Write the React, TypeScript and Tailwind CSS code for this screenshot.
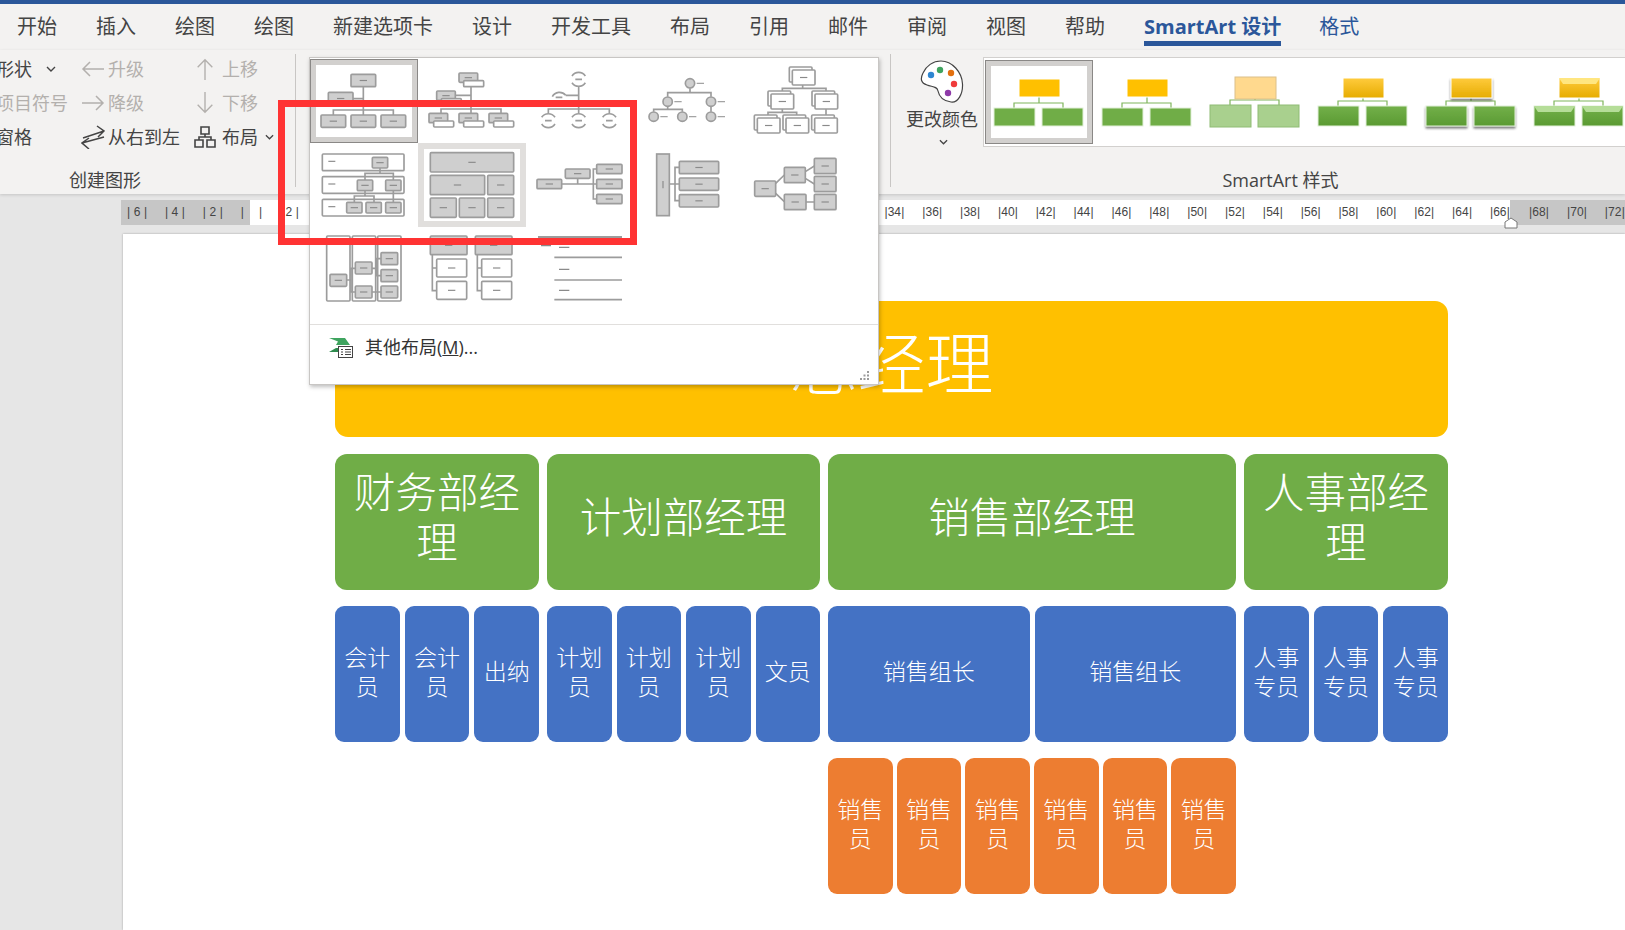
const tabs = ["开始", "插入", "绘图", "绘图", "新建选项卡", "设计", "开发工具", "布局", "引用", "邮件", "审阅", "视图", "帮助"];

const INK = "#9c9c9c";
const GREY = "#cfcfcf";

// all thumb coordinates are in 3x pixels, one cell is 324x252
function Box({ x, y, w, h, fill = GREY, dash = true }: { x: number; y: number; w: number; h: number; fill?: string; dash?: boolean }) {
  const cx = x + w / 2;
  const cy = y + h / 2;
  return (
    <>
      <rect x={x} y={y} width={w} height={h} rx={3} fill={fill} stroke={INK} strokeWidth={5} />
      {dash && <path d={`M${cx - 11} ${cy}H${cx + 11}`} stroke="#8a8a8a" strokeWidth={3.5} />}
    </>
  );
}

function Thumb({ ox, oy, lines, children }: { ox: number; oy: number; lines?: string; children?: React.ReactNode }) {
  return (
    <svg viewBox={`${ox} ${oy} 324 252`} className="block h-[84px] w-[108px]">
      {lines && <path d={lines} fill="none" stroke={INK} strokeWidth={5} />}
      {children}
    </svg>
  );
}

function Arcs({ x, y }: { x: number; y: number }) {
  return (
    <path
      d={`M${x - 20} ${y - 10}A24 24 0 0 1 ${x + 20} ${y - 10}M${x - 20} ${y + 10}A24 24 0 0 0 ${x + 20} ${y + 10}M${x - 10} ${y}H${x + 10}`}
      fill="none"
      stroke={INK}
      strokeWidth={5}
    />
  );
}

function Dot({ x, y, dash = true }: { x: number; y: number; dash?: boolean }) {
  return (
    <>
      <circle cx={x} cy={y} r={14} fill={GREY} stroke={INK} strokeWidth={5} />
      {dash && <path d={`M${x + 20} ${y}H${x + 42}`} stroke={INK} strokeWidth={3.5} />}
    </>
  );
}

function Stack({ x, y }: { x: number; y: number }) {
  return (
    <>
      <rect x={x - 9} y={y - 9} width={68} height={45} rx={3} fill="#fff" stroke={INK} strokeWidth={5} />
      <Box x={x} y={y} w={68} h={45} fill="#fff" />
    </>
  );
}

function Pair({ x, y }: { x: number; y: number }) {
  return (
    <>
      <Box x={x} y={y} w={56} h={28} />
      <Box x={x + 14} y={y + 23} w={60} h={18} fill="#fff" dash={false} />
    </>
  );
}

const layouts = [
  <Thumb ox={30} oy={27} lines="M190 110V195M159 146H190M100 195V180H280V195">
    <Box x={153} y={73} w={74} h={37} />
    <Box x={85} y={127} w={74} h={37} />
    <Box x={63} y={195} w={74} h={37} />
    <Box x={153} y={195} w={74} h={37} />
    <Box x={243} y={195} w={74} h={37} />
  </Thumb>,
  <Thumb ox={354} oy={27} lines="M513 110V190M466 136H513M423 190V177H603V190">
    <Pair x={477} y={69} />
    <Pair x={410} y={123} />
    <Pair x={387} y={190} />
    <Pair x={477} y={190} />
    <Pair x={567} y={190} />
  </Thumb>,
  <Thumb ox={678} oy={27} lines="M836 110V190M797 136H836M745 190V177H928V190">
    <Arcs x={836} y={88} />
    <path d="M757 140A24 24 0 0 1 797 136M767 142H787" fill="none" stroke={INK} strokeWidth={5} />
    <Arcs x={745} y={212} />
    <Arcs x={836} y={212} />
    <Arcs x={928} y={212} />
  </Thumb>,
  <Thumb ox={42} oy={27} lines="M210 115V128M143 140V128H273V140M143 170V178M101 185V178H187V185M273 170V185">
    <Dot x={210} y={100} />
    <Dot x={143} y={155} />
    <Dot x={273} y={155} />
    <Dot x={101} y={200} />
    <Dot x={187} y={200} />
    <Dot x={273} y={200} />
  </Thumb>,
  <Thumb ox={366} oy={27} lines="M548 105V115M487 123V115H618V123M487 177V187M444 195V187H530V195M618 177V195">
    <Stack x={517} y={60} />
    <Stack x={453} y={132} />
    <Stack x={585} y={132} />
    <Stack x={412} y={204} />
    <Stack x={498} y={204} />
    <Stack x={584} y={204} />
  </Thumb>,
  <Thumb ox={30} oy={279}>
    {[312, 380, 448].map((y) => (
      <g key={y}>
        <rect x={67} y={y} width={245} height={50} rx={3} fill="#fff" stroke={INK} strokeWidth={5} />
        <path d={`M85 ${y + 22}H106`} stroke="#8a8a8a" strokeWidth={3.5} />
      </g>
    ))}
    <path d="M240 354V370M195 390V370H280V390M195 422V438M163 457V438H222V457M280 422V457" fill="none" stroke={INK} strokeWidth={5} />
    <Box x={217} y={322} w={46} h={32} />
    <Box x={172} y={390} w={46} h={32} />
    <Box x={257} y={390} w={46} h={32} />
    <Box x={140} y={457} w={46} h={32} />
    <Box x={198} y={457} w={46} h={32} />
    <Box x={257} y={457} w={46} h={32} />
  </Thumb>,
  <Thumb ox={354} oy={279}>
    <Box x={391} y={308} w={250} h={58} />
    <Box x={391} y={376} w={163} h={58} />
    <Box x={563} y={376} w={78} h={58} />
    <Box x={391} y={444} w={78} h={58} />
    <Box x={478} y={444} w={76} h={58} />
    <Box x={563} y={444} w={78} h={58} />
  </Thumb>,
  <Thumb ox={678} oy={279} lines="M785 402H890M833 385V402M890 357H880V447H890">
    <Box x={711} y={388} w={74} h={28} />
    <Box x={796} y={357} w={74} h={28} />
    <Box x={890} y={343} w={76} h={28} />
    <Box x={890} y={388} w={76} h={28} />
    <Box x={890} y={433} w={76} h={28} />
  </Thumb>,
  <Thumb ox={42} oy={279} lines="M148 402H178M178 352H165V452H178">
    <rect x={110} y={312} width={38} height={185} fill={GREY} stroke={INK} strokeWidth={5} />
    <path d="M129 393V415" stroke="#8a8a8a" strokeWidth={3.5} />
    <Box x={178} y={334} w={118} h={37} />
    <Box x={178} y={384} w={118} h={37} />
    <Box x={178} y={434} w={118} h={37} />
  </Thumb>,
  <Thumb ox={366} oy={279} lines="M467 400L493 375M467 430L493 455M556 365L583 348M556 385L583 402M558 456H583">
    <Box x={404} y={393} w={63} h={46} />
    <Box x={493} y={352} w={63} h={46} />
    <Box x={493} y={433} w={65} h={46} />
    <Box x={583} y={325} w={65} h={46} />
    <Box x={583} y={379} w={65} h={46} />
    <Box x={583} y={433} w={65} h={46} />
  </Thumb>,
  <Thumb ox={30} oy={-9}>
    {[80, 157, 233].map((x) => (
      <rect key={x} x={x} y={18} width={70} height={195} rx={3} fill="#fff" stroke={INK} strokeWidth={5} />
    ))}
    <path d="M140 150H153V115H166M153 150V186H166M216 186H243M216 115H230V86H243M230 115V137H243" fill="none" stroke={INK} strokeWidth={5} />
    <Box x={90} y={133} w={50} h={36} />
    <Box x={166} y={96} w={50} h={36} />
    <Box x={166} y={168} w={50} h={36} />
    <Box x={243} y={68} w={50} h={36} />
    <Box x={243} y={119} w={50} h={36} />
    <Box x={243} y={168} w={50} h={36} />
  </Thumb>,
  <Thumb ox={354} oy={-9} lines="M397 74V182H410M397 114H410M532 74V182H545M532 114H545">
    <Box x={391} y={18} w={110} h={56} />
    <Box x={526} y={18} w={110} h={56} />
    <Box x={410} y={87} w={90} h={54} fill="#fff" />
    <Box x={410} y={154} w={90} h={54} fill="#fff" />
    <Box x={545} y={87} w={90} h={54} fill="#fff" />
    <Box x={545} y={154} w={90} h={54} fill="#fff" />
  </Thumb>,
  <Thumb ox={678} oy={-9} lines="M763 82H966M763 150H966M763 209H966">
    <rect x={714} y={18} width={252} height={20} fill={INK} />
    <path d="M723 47H753M777 52H808M777 118H808M777 181H808" stroke="#8a8a8a" strokeWidth={3.5} />
  </Thumb>,
];

// SmartArt style thumbs, coordinates are plain pixels in a 108x84 cell
function StyleThumb({ kind }: { kind: number }) {
  const pale = kind === 3;
  const flat = kind === 1 || kind === 2;
  const y = pale ? 17 : flat ? 19 : 18;
  const topH = pale ? 22 : flat ? 18 : 20;
  const gy = pale ? 45 : flat ? 48 : 46;
  const gh = pale ? 22 : flat ? 18 : 20;
  const topFill = pale ? "#ffd98e" : flat ? "#ffc000" : `url(#yel${kind})`;
  const greenFill = pale ? "#a9d08e" : flat ? "#70ad47" : `url(#grn${kind})`;
  const edge = pale ? "#dcc08a" : "#ffffff";
  const edgeG = pale ? "#8fbc75" : "#e2f0d9";
  const shadow = kind === 5 ? `url(#sh${kind})` : undefined;
  const boxes = [9, 57];
  return (
    <svg viewBox="0 0 108 84" className="block h-[84px] w-[108px] shrink-0">
      <defs>
        <linearGradient id={`yel${kind}`} x1="0" y1="0" x2="0" y2="1">
          <stop offset="0" stopColor="#ffcb3d" />
          <stop offset="1" stopColor="#e6ac00" />
        </linearGradient>
        <linearGradient id={`grn${kind}`} x1="0" y1="0" x2="0" y2="1">
          <stop offset="0" stopColor="#73b04a" />
          <stop offset="1" stopColor="#5a9a32" />
        </linearGradient>
        <filter id={`sh${kind}`} x="-20%" y="-20%" width="140%" height="160%">
          <feDropShadow dx="0" dy="2" stdDeviation="1.2" floodColor="#333" floodOpacity="0.65" />
        </filter>
      </defs>
      <path d={`M54 ${y + topH}V${gy - 5}M29 ${gy}V${gy - 5}H78V${gy}`} fill="none" stroke="#7fb55c" strokeWidth={1.2} />
      <rect x={34} y={y} width={41} height={topH} fill={topFill} stroke={edge} strokeWidth={1} filter={shadow} />
      {boxes.map((x) => (
        <rect key={x} x={x} y={gy} width={41} height={gh} fill={greenFill} stroke={edgeG} strokeWidth={1} filter={shadow} />
      ))}
      {kind === 6 && (
        <>
          <path d={`M34 ${y}H75L71 ${y + 6}H38Z`} fill="#ffe680" />
          {boxes.map((x) => (
            <path key={x} d={`M${x} ${gy}H${x + 41}L${x + 37} ${gy + 6}H${x + 4}Z`} fill="#b5dd98" />
          ))}
        </>
      )}
    </svg>
  );
}

function Chevron({ className }: { className: string }) {
  return (
    <svg viewBox="0 0 10 6" className={className} fill="none" stroke="#444" strokeWidth={1.4}>
      <path d="M1 1l4 4 4-4" />
    </svg>
  );
}

function ArrowIcon({ d, big }: { d: string; big?: boolean }) {
  return (
    <svg viewBox="0 0 24 24" className={big ? "h-[24px] w-[24px]" : "h-[24px] w-[22px]"} fill="none" stroke="#b3b0ad" strokeWidth={1.5}>
      <path d={d} />
    </svg>
  );
}

function Tick({ n }: { n: number }) {
  return (
    <span className="flex w-[20px] justify-between">
      <span>|</span>
      <span>{n}</span>
      <span>|</span>
    </span>
  );
}

function Cells({ items, color, gap }: { items: string[]; color: string; gap: string }) {
  return (
    <div className={`flex h-[136px] ${gap}`}>
      {items.map((t, i) => (
        <div key={i} className={`flex flex-1 items-center justify-center rounded-[9px] px-[8px] pb-[5px] text-center text-[23px] leading-[29px] font-light text-white ${color}`}>
          {t}
        </div>
      ))}
    </div>
  );
}

function Manager({ text }: { text: string }) {
  return (
    <div className="flex h-[136px] items-center justify-center rounded-[12px] bg-[#70ad47] px-[18px] pb-[11px] text-center text-[41.5px] leading-[50px] font-light text-white">
      {text}
    </div>
  );
}

export default function App() {
  return (
    <div className="relative flex h-[930px] w-[1625px] flex-col overflow-hidden bg-[#e6e6e6] font-['Open_Sans','Noto_Sans_CJK_SC',sans-serif] text-[#444]">
      <div className="h-[4px] bg-[#2b579a]" />

      <div className="flex h-[46px] gap-[39px] bg-[#f3f2f1] pl-[17px] text-[20px] leading-[46px]">
        {tabs.map((t, i) => (
          <span key={i} className="whitespace-nowrap">{t}</span>
        ))}
        <span className="h-[42px] border-b-[5px] border-[#2b579a] font-bold whitespace-nowrap text-[#2b579a]">SmartArt 设计</span>
        <span className="-ml-[1px] whitespace-nowrap text-[#2b579a]">格式</span>
      </div>

      <div className="relative z-10 flex h-[144px] bg-[#f3f2f1] pt-[4px] text-[18px] shadow-[0_1px_3px_rgba(0,0,0,0.15)]">
        <div className="h-[133px] w-[296px] shrink-0 border-r border-[#c8c6c4]">
          <div className="-mt-[2px] flex">
            <div className="w-[68px] overflow-hidden">
              <div className="flex h-[34px] items-center justify-end pr-[12px] whitespace-nowrap">
                转换为形状
                <Chevron className="ml-[14px] h-[6px] w-[10px] shrink-0" />
              </div>
              <div className="flex h-[34px] items-center justify-end whitespace-nowrap text-[#b3b0ad]">添加项目符号</div>
              <div className="flex h-[34px] items-center justify-end pr-[36px] whitespace-nowrap">文本窗格</div>
            </div>

            <div className="ml-[13px] w-[113px]">
              <div className="flex h-[34px] items-center gap-[3px] text-[#b3b0ad]">
                <ArrowIcon big d="M23 12H2M9 5l-7 7 7 7" />
                升级
              </div>
              <div className="flex h-[34px] items-center gap-[3px] text-[#b3b0ad]">
                <ArrowIcon big d="M1 12h21M15 5l7 7-7 7" />
                降级
              </div>
              <div className="flex h-[34px] items-center gap-[3px] whitespace-nowrap">
                <svg viewBox="0 0 24 24" className="h-[24px] w-[24px]" fill="none" stroke="#444" strokeWidth={1.5}>
                  <path d="M2 13L23 6M16 1l7 5-6 6M23 12L1 18M8 13l-7 5 7 6" />
                </svg>
                从右到左
              </div>
            </div>

            <div>
              <div className="flex h-[34px] items-center gap-[6px] text-[#b3b0ad]">
                <ArrowIcon d="M12 24V2M4 10l8-8 8 8" />
                上移
              </div>
              <div className="flex h-[34px] items-center gap-[6px] text-[#b3b0ad]">
                <ArrowIcon d="M12 0v22M4 14l8 8 8-8" />
                下移
              </div>
              <div className="flex h-[34px] items-center gap-[6px]">
                <svg viewBox="0 0 22 22" className="h-[22px] w-[22px]" fill="none" stroke="#444" strokeWidth={1.6}>
                  <path d="M7 1h8v7H7zM1 14h8v7H1zM13 14h8v7h-8zM11 8v3M5 14v-3h12v3" />
                </svg>
                布局
                <Chevron className="ml-[1px] h-[6px] w-[9px]" />
              </div>
            </div>
          </div>
          <div className="mt-[14px] w-[210px] text-center leading-[24px]">创建图形</div>
        </div>

        <div className="relative w-[594px] shrink-0">
          <div className="absolute top-[3px] left-[13px] h-[328px] w-[570px] border border-[#c8c6c4] bg-white text-[#333] shadow-[1px_2px_4px_rgba(0,0,0,0.25)]">
            <div className="grid grid-cols-[repeat(5,108px)] auto-rows-[84px] pt-[1px]">
              {layouts.map((thumb, i) => (
                <div key={i} className="relative">
                  {thumb}
                  {i === 0 && <div className="absolute inset-0 border-[6px] border-[#d2d0ce] outline outline-1 -outline-offset-1 outline-[#8a8886]" />}
                  {i === 6 && <div className="absolute inset-0 border-[6px] border-[#e1dfdd]" />}
                </div>
              ))}
            </div>
            <div className="mt-[13px] border-t border-[#e1dfdd]" />
            <div className="flex h-[45px] items-center pl-[18px]">
              <svg viewBox="0 0 25 20" className="h-[20px] w-[25px]">
                <path d="M1 0h16l5 7H8l2-3.5L1 0z" fill="#3fa45f" />
                <path d="M1 14l7-4h4v4H1z" fill="#2e8b4e" />
                <rect x="10.5" y="8.5" width="14" height="11" fill="#fff" stroke="#444" />
                <path d="M13 11.5h2M17 11.5h6M13 14h2M17 14h6M13 16.5h2M17 16.5h6" stroke="#444" />
              </svg>
              <span className="ml-[12px] whitespace-nowrap">
                其他布局(<span className="underline">M</span>)...
              </span>
            </div>
            <svg viewBox="0 0 10 9" className="absolute right-[8px] bottom-[4px] h-[9px] w-[10px]" fill="#9a9a9a">
              <rect x="7" y="0" width="2" height="2" />
              <rect x="7" y="3.5" width="2" height="2" />
              <rect x="3.5" y="3.5" width="2" height="2" />
              <rect x="7" y="7" width="2" height="2" />
              <rect x="3.5" y="7" width="2" height="2" />
              <rect x="0" y="7" width="2" height="2" />
            </svg>
          </div>
        </div>

        <div className="h-[133px] w-[780px] shrink-0 border-l border-[#c8c6c4]">
          <div className="flex h-[103px]">
            <div className="ml-[15px] flex w-[72px] flex-col items-center pt-[6px]">
              <svg viewBox="0 0 44 43" className="h-[43px] w-[44px]">
                <path d="M21 1C32 1 42 12 42.5 24C43 34 38 43 31 42C23 41 19 36 18 31C17 26 12 27 7 25C1 23 0 19 3 13C6 6 13 1 21 1Z" fill="#fff" stroke="#444" strokeWidth={1.2} />
                <circle cx="11" cy="15" r="3.2" fill="#2e86d1" />
                <circle cx="20" cy="10" r="3.2" fill="#3fa45f" />
                <circle cx="31" cy="13" r="3.2" fill="#e3700f" />
                <circle cx="34" cy="24" r="3.2" fill="#ef3b3b" />
                <circle cx="28" cy="33" r="3.2" fill="#8e3aa8" />
              </svg>
              <span className="mt-[4px] leading-[24px] whitespace-nowrap">更改颜色</span>
              <Chevron className="mt-[8px] ml-[3px] h-[6px] w-[9px]" />
            </div>
            <div className="mt-[3px] ml-[5px] flex h-[90px] w-[680px] items-start border border-[#d2d0ce] bg-white pt-[2px] pl-[1px]">
              {[1, 2, 3, 4, 5, 6].map((k) => (
                <div key={k} className="relative">
                  <StyleThumb kind={k} />
                  {k === 1 && <div className="absolute inset-0 border-[6px] border-[#d2d0ce] outline outline-1 -outline-offset-1 outline-[#8a8886]" />}
                </div>
              ))}
            </div>
          </div>
          <div className="mt-[11px] text-center leading-[24px]">SmartArt 样式</div>
        </div>
      </div>

      <div className="mt-[6px] flex h-[25px] shrink-0 pl-[121px] font-['Liberation_Sans',sans-serif] text-[12px] leading-[25px] text-[#444]">
        <div className="flex w-[129px] gap-[17.9px] bg-[#c6c6c6] pl-[6px]">
          {[6, 4, 2].map((n) => (
            <Tick key={n} n={n} />
          ))}
          <span>|</span>
        </div>
        <div className="flex w-[1260px] gap-[17.9px] bg-white pl-[9px]">
          <span className="w-[2px]">|</span>
          {Array.from({ length: 33 }, (_, i) => (i + 1) * 2).map((n) => (
            <Tick key={n} n={n} />
          ))}
        </div>
        <div className="flex flex-1 gap-[17.9px] bg-[#c6c6c6] pl-[19px]">
          {[68, 70, 72].map((n) => (
            <Tick key={n} n={n} />
          ))}
        </div>
      </div>

      <div className="ml-[123px] mt-[9px] flex-1 bg-white pt-[67px] pl-[212px] shadow-[0_0_2px_rgba(0,0,0,0.3)]">
        <div className="w-[1113px]">
          <div className="flex h-[136px] items-center justify-center rounded-[13px] bg-[#ffc000] pb-[12px] text-[68px] leading-none font-light text-white">总经理</div>
          <div className="mt-[17px] flex items-start gap-[8px]">
            <div className="flex w-[204px] flex-col gap-[16px]">
              <Manager text="财务部经理" />
              <Cells items={["会计员", "会计员", "出纳"]} color="bg-[#4472c4]" gap="gap-[5px]" />
            </div>
            <div className="flex w-[273px] flex-col gap-[16px]">
              <Manager text="计划部经理" />
              <Cells items={["计划员", "计划员", "计划员", "文员"]} color="bg-[#4472c4]" gap="gap-[5px]" />
            </div>
            <div className="flex w-[408px] flex-col gap-[16px]">
              <Manager text="销售部经理" />
              <Cells items={["销售组长", "销售组长"]} color="bg-[#4472c4]" gap="gap-[5px]" />
              <Cells items={["销售员", "销售员", "销售员", "销售员", "销售员", "销售员"]} color="bg-[#ed7d31]" gap="gap-[4px]" />
            </div>
            <div className="flex w-[204px] flex-col gap-[16px]">
              <Manager text="人事部经理" />
              <Cells items={["人事专员", "人事专员", "人事专员"]} color="bg-[#4472c4]" gap="gap-[5px]" />
            </div>
          </div>
        </div>
      </div>

      {/* red annotation and ruler marker sit over everything */}
      <div className="absolute top-[100px] left-[278px] z-20 h-[145px] w-[359px] border-[7px] border-[#ff3333]" />
      <svg viewBox="0 0 14 12" className="absolute top-[217px] left-[1504px] z-20 h-[12px] w-[14px]" fill="#fff" stroke="#777">
        <path d="M1 11V5l6-4 6 4v6z" />
      </svg>
    </div>
  );
}
